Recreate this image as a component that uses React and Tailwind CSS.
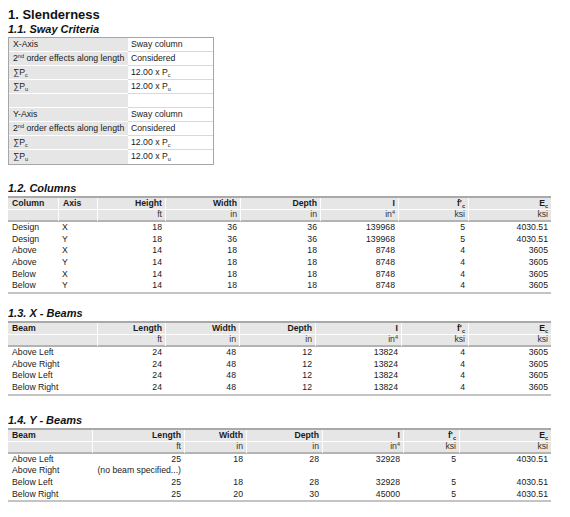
import React from 'react';

const Sub = ({ children }) => <span className="relative top-[2px] text-[5.5px]">{children}</span>;
const Sup = ({ children }) => <span className="relative -top-[3px] text-[5.5px]">{children}</span>;

const swayRows = [
  ['X-Axis', 'Sway column'],
  [<>2<Sup>nd</Sup> order effects along length</>, 'Considered'],
  [<>∑P<Sub>c</Sub></>, <>12.00 x P<Sub>c</Sub></>],
  [<>∑P<Sub>u</Sub></>, <>12.00 x P<Sub>u</Sub></>],
  ['', ''],
  ['Y-Axis', 'Sway column'],
  [<>2<Sup>nd</Sup> order effects along length</>, 'Considered'],
  [<>∑P<Sub>c</Sub></>, <>12.00 x P<Sub>c</Sub></>],
  [<>∑P<Sub>u</Sub></>, <>12.00 x P<Sub>u</Sub></>],
];

const fc = <>f'<Sub>c</Sub></>;
const ec = <>E<Sub>c</Sub></>;
const in4 = <>in<Sup>4</Sup></>;

const columnsTable = {
  cols: 'grid-cols-[50px_39px_68px_75px_80px_78px_70px_83px]',
  left: 2,
  headers: ['Column', 'Axis', 'Height', 'Width', 'Depth', 'I', fc, ec],
  units: ['', '', 'ft', 'in', 'in', in4, 'ksi', 'ksi'],
  rows: [
    ['Design', 'X', '18', '36', '36', '139968', '5', '4030.51'],
    ['Design', 'Y', '18', '36', '36', '139968', '5', '4030.51'],
    ['Above', 'X', '14', '18', '18', '8748', '4', '3605'],
    ['Above', 'Y', '14', '18', '18', '8748', '4', '3605'],
    ['Below', 'X', '14', '18', '18', '8748', '4', '3605'],
    ['Below', 'Y', '14', '18', '18', '8748', '4', '3605'],
  ],
};

const xBeams = {
  cols: 'grid-cols-[89px_68px_74px_76px_86px_67px_83px]',
  left: 1,
  headers: ['Beam', 'Length', 'Width', 'Depth', 'I', fc, ec],
  units: ['', 'ft', 'in', 'in', in4, 'ksi', 'ksi'],
  rows: [
    ['Above Left', '24', '48', '12', '13824', '4', '3605'],
    ['Above Right', '24', '48', '12', '13824', '4', '3605'],
    ['Below Left', '24', '48', '12', '13824', '4', '3605'],
    ['Below Right', '24', '48', '12', '13824', '4', '3605'],
  ],
};

const yBeams = {
  cols: 'grid-cols-[84px_92px_62px_76px_81px_56px_92px]',
  left: 1,
  headers: ['Beam', 'Length', 'Width', 'Depth', 'I', fc, ec],
  units: ['', 'ft', 'in', 'in', in4, 'ksi', 'ksi'],
  rows: [
    ['Above Left', '25', '18', '28', '32928', '5', '4030.51'],
    ['Above Right', '(no beam specified...)', '', '', '', '', ''],
    ['Below Left', '25', '18', '28', '32928', '5', '4030.51'],
    ['Below Right', '25', '20', '30', '45000', '5', '4030.51'],
  ],
};

const SectionTitle = ({ children, className }) => (
  <div className={`h-[15px] text-[11px] leading-[15px] font-bold italic text-[#111] ${className}`}>{children}</div>
);

const DataTable = ({ table }) => {
  const align = (i) => (i < table.left ? 'text-left pl-[4px]' : 'text-right pr-[3px]');
  return (
    <div className="w-[543px]">
      <div className={`grid ${table.cols} h-[13px] border-t-2 border-[#a9a9a9] bg-[#e6e6e6] font-bold leading-[10px]`}>
        {table.headers.map((h, i) => (
          <div key={i} className={`whitespace-nowrap border-b border-white ${i > 0 ? 'border-l' : ''} ${align(i)}`}>{h}</div>
        ))}
      </div>
      <div className={`grid ${table.cols} h-[13px] border-b-2 border-[#b3b3b3] bg-[#e6e6e6] leading-[11px] text-[#333]`}>
        {table.units.map((u, i) => (
          <div key={i} className={`whitespace-nowrap border-white ${i > 0 ? 'border-l' : ''} ${align(i)}`}>{u}</div>
        ))}
      </div>
      {table.rows.map((r, ri) => (
        <div key={ri} className={`grid ${table.cols} h-[11.67px] leading-[11.67px]`}>
          {r.map((c, i) => (
            <div key={i} className={`flex whitespace-nowrap ${i < table.left ? 'justify-start pl-[4px]' : 'justify-end pr-[3px]'}`}>{c}</div>
          ))}
        </div>
      ))}
      <div className="border-b-2 border-[#c4c4c4]" />
    </div>
  );
};

export default function App() {
  return (
    <div className="min-h-[517px] w-[570px] bg-white pl-[8px] pt-[7px] font-['Liberation_Sans',Arial,sans-serif] text-[8.7px] text-[#1a1a1a]">
      <div className="h-[15px] text-[13px] leading-[15px] font-bold text-[#111]">1. Slenderness</div>
      <SectionTitle>1.1. Sway Criteria</SectionTitle>
      <div className="w-[206px] border border-[#a6a6a6]">
        {swayRows.map((r, i) => (
          <div key={i} className="flex h-[14px] leading-[13px]">
            <div className={`w-[119px] whitespace-nowrap bg-[#e6e6e6] pl-[4px] ${i < swayRows.length - 1 ? 'border-b border-white' : ''}`}>{r[0]}</div>
            <div className={`flex-1 whitespace-nowrap pl-[3px] ${i < swayRows.length - 1 ? 'border-b border-[#d9d9d9]' : ''}`}>{r[1]}</div>
          </div>
        ))}
      </div>

      <SectionTitle className="mt-[16px]">1.2. Columns</SectionTitle>
      <DataTable table={columnsTable} />

      <SectionTitle className="mt-[12px]">1.3. X - Beams</SectionTitle>
      <DataTable table={xBeams} />

      <SectionTitle className="mt-[17px]">1.4. Y - Beams</SectionTitle>
      <DataTable table={yBeams} />
    </div>
  );
}
